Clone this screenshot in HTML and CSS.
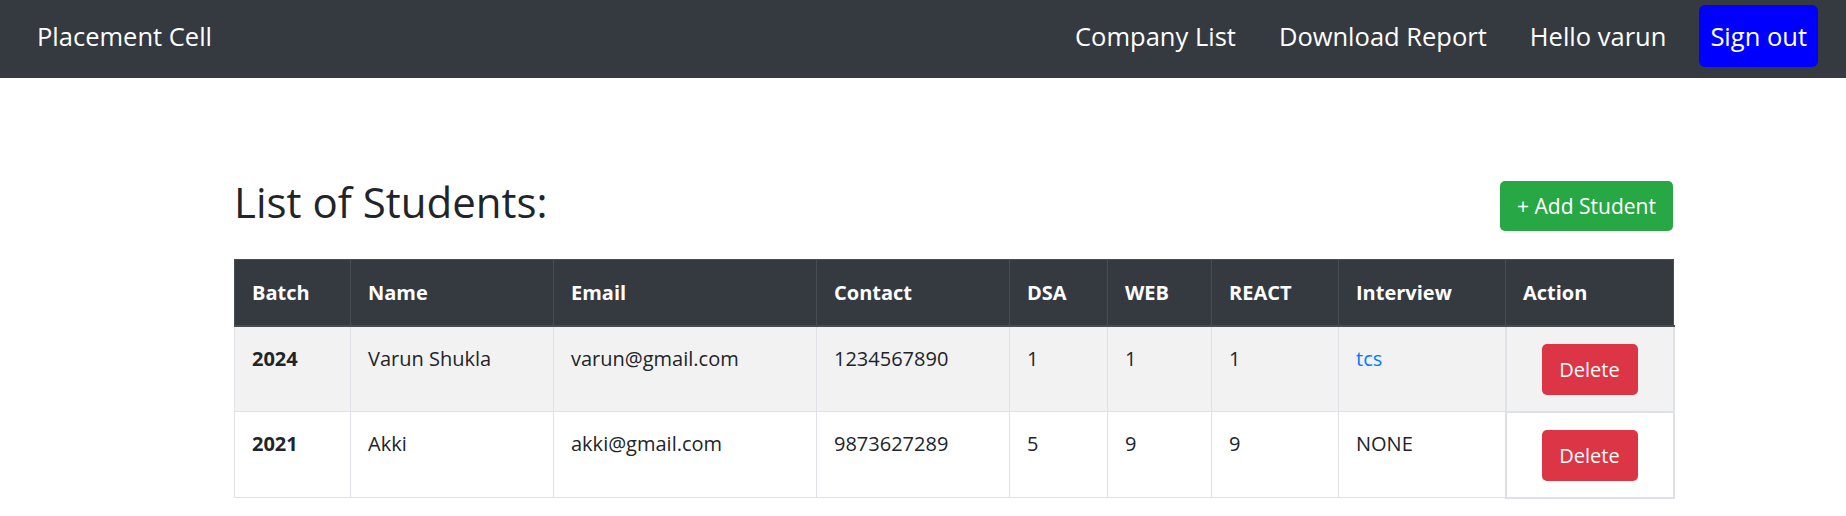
FILE: index.html
```html
<!DOCTYPE html>
<html lang="en">
<head>
<meta charset="utf-8">
<title>Placement Cell</title>
<link rel="stylesheet" href="styles.css">
</head>
<body>
<nav class="navbar">
  <a class="brand" href="#">Placement Cell</a>
  <div class="nav-right">
    <a class="nav-link" href="#">Company List</a>
    <a class="nav-link" href="#">Download Report</a>
    <span class="nav-link">Hello varun</span>
    <a class="signout" href="#">Sign out</a>
  </div>
</nav>
<main class="container">
  <div class="page-head">
    <h1 class="title">List of Students:</h1>
    <a class="btn btn-add" href="#">+ Add Student</a>
  </div>
  <table class="students">
    <colgroup>
      <col class="c-batch"><col class="c-name"><col class="c-email"><col class="c-contact"><col class="c-dsa"><col class="c-web"><col class="c-react"><col class="c-interview"><col class="c-action">
    </colgroup>
    <thead>
      <tr>
        <th>Batch</th><th>Name</th><th>Email</th><th>Contact</th><th>DSA</th><th>WEB</th><th>REACT</th><th>Interview</th><th>Action</th>
      </tr>
    </thead>
    <tbody>
      <tr class="odd">
        <th>2024</th><td>Varun Shukla</td><td>varun@gmail.com</td><td>1234567890</td><td>1</td><td>1</td><td>1</td><td><a class="link" href="#">tcs</a></td>
        <td class="action"><a class="btn btn-del" href="#">Delete</a></td>
      </tr>
      <tr>
        <th>2021</th><td>Akki</td><td>akki@gmail.com</td><td>9873627289</td><td>5</td><td>9</td><td>9</td><td>NONE</td>
        <td class="action"><a class="btn btn-del" href="#">Delete</a></td>
      </tr>
    </tbody>
  </table>
</main>
</body>
</html>
```
FILE: styles.css
```css
* { box-sizing: border-box; }
html, body { margin: 0; padding: 0; background: #fff; }
body {
  font-family: "Open Sans", "Noto Sans", sans-serif;
  color: #212529;
  font-size: 20px;
}
a { text-decoration: none; }

.navbar {
  height: 78px;
  background: #343a40;
  display: flex;
  align-items: center;
  justify-content: space-between;
  padding: 0 28px 6px 37px;
}
.brand {
  color: #fff;
  font-size: 25.5px;
  line-height: 30px;
}
.nav-right {
  display: flex;
  align-items: center;
}
.nav-link {
  color: #fff;
  font-size: 25.5px;
  line-height: 30px;
  margin-right: 43px;
}
.nav-link:nth-child(3) { margin-right: 33px; }
.signout {
  display: block;
  background: #0000ff;
  color: #fff;
  font-size: 25.5px;
  line-height: 62px;
  height: 62px;
  padding: 0 11px;
  border-radius: 6px;
}

.container {
  margin-left: 234px;
  width: 1439px;
  padding-top: 98px;
}
.page-head {
  display: flex;
  align-items: center;
  justify-content: space-between;
  height: 60px;
  margin-bottom: 23px;
}
.title {
  margin: 0 0 8px;
  font-size: 42px;
  font-weight: 500;
  line-height: 52px;
}
.btn {
  display: inline-block;
  color: #fff;
  border-radius: 5px;
  text-align: center;
}
.btn-add {
  background: #28a745;
  font-size: 21px;
  height: 50px;
  line-height: 50px;
  width: 173px;
}

.students {
  width: 1439px;
  border-collapse: collapse;
  table-layout: fixed;
}
.c-batch { width: 116px; }
.c-name { width: 203px; }
.c-email { width: 263px; }
.c-contact { width: 193px; }
.c-dsa { width: 98px; }
.c-web { width: 104px; }
.c-react { width: 127px; }
.c-interview { width: 167px; }
.c-action { width: 168px; }

.students thead th {
  background: #343a40;
  color: #fff;
  border: 1px solid #454d55;
  border-bottom: 2px solid #454d55;
  height: 66px;
  padding: 0 17px;
  text-align: left;
  font-weight: 700;
  vertical-align: middle;
}
.students tbody th,
.students tbody td {
  border: 1px solid #dee2e6;
  padding: 17px 17px;
  line-height: 30px;
  text-align: left;
  vertical-align: top;
  height: 85px;
}
.students tbody th { font-weight: 700; }
.students tbody tr.odd { background: #f2f2f2; }
.students tbody td.action {
  border: 2px solid #dee2e6;
  text-align: center;
  padding: 17px 0 16px;
}
.link { color: #007bff; }
.btn-del {
  background: #dc3545;
  font-size: 20px;
  width: 96px;
  height: 51px;
  line-height: 51px;
  vertical-align: top;
}
```
